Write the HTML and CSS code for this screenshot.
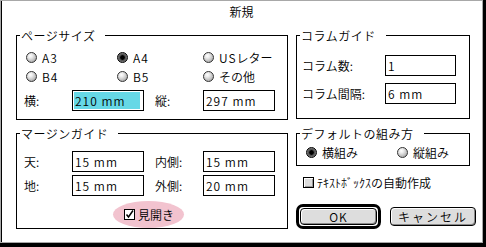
FILE: index.html
```html
<!DOCTYPE html>
<html lang="ja">
<head>
<meta charset="utf-8">
<title>新規</title>
<link rel="stylesheet" href="styles.css">
</head>
<body>
<div class="screen">
  <div class="dialog">
    <div class="title">新規</div>
    <div class="grid">
      <fieldset class="box page">
        <legend>ページサイズ</legend>
        <div class="radios">
          <span class="opt"><span class="radio"></span><span class="lat">A3</span></span>
          <span class="opt"><span class="radio on"></span><span class="lat">A4</span></span>
          <span class="opt"><span class="radio"></span><span><span class="lat">US</span>レター</span></span>
          <span class="opt"><span class="radio"></span><span class="lat">B4</span></span>
          <span class="opt"><span class="radio"></span><span class="lat">B5</span></span>
          <span class="opt"><span class="radio"></span><span>その他</span></span>
        </div>
        <div class="fields">
          <span class="lbl">横:</span><span class="field"><span class="sel">210 mm</span></span>
          <span class="lbl">縦:</span><span class="field">297 mm</span>
        </div>
      </fieldset>
      <fieldset class="box cols">
        <legend>コラムガイド</legend>
        <div class="colfields">
          <span class="lbl">コラム数:</span><span class="field">1</span>
          <span class="lbl">コラム間隔:</span><span class="field">6 mm</span>
        </div>
      </fieldset>
      <fieldset class="box margin">
        <legend>マージンガイド</legend>
        <div class="fields mfields">
          <span class="lbl">天:</span><span class="field">15 mm</span>
          <span class="lbl">内側:</span><span class="field">15 mm</span>
          <span class="lbl">地:</span><span class="field">15 mm</span>
          <span class="lbl">外側:</span><span class="field">20 mm</span>
        </div>
        <div class="spread">
          <span class="check"><svg width="9" height="9" viewBox="0 0 9 9"><path d="M1.5 4.5 L3.5 7 L8 0.5" fill="none" stroke="#000" stroke-width="1.5"/></svg></span><span>見開き</span>
        </div>
      </fieldset>
      <div class="side">
        <fieldset class="box default">
          <legend>デフォルトの組み方</legend>
          <div class="dradios">
            <span class="opt"><span class="radio on"></span><span>横組み</span></span>
            <span class="opt"><span class="radio"></span><span>縦組み</span></span>
          </div>
        </fieldset>
        <div class="auto"><span class="check gray"></span><span>ﾃｷｽﾄﾎﾞｯｸｽの自動作成</span></div>
        <div class="buttons">
          <span class="ring"><span class="btn lat">OK</span></span>
          <span class="btn cancel">キャンセル</span>
        </div>
      </div>
    </div>
  </div>
</div>
</body>
</html>
```
FILE: styles.css
```css
html, body {
  margin: 0;
  padding: 0;
}
body {
  font-family: "Noto Sans CJK JP", "Noto Sans CJK SC", sans-serif;
  font-size: 12px;
  font-weight: 350;
  color: #000;
  background: #000;
}
.lat {
  letter-spacing: 1px;
}
.screen {
  width: 486px;
  height: 247px;
  background: #000;
  overflow: hidden;
}
.dialog {
  box-sizing: border-box;
  width: 483px;
  height: 243px;
  background: #fff;
  border: 1px solid #a8a8a8;
  box-shadow: inset 1px 0 0 #000;
}
.title {
  text-align: center;
  padding-top: 4px;
  line-height: 14px;
  height: 15px;
}
.grid {
  margin: 8px 0 0 15px;
  display: grid;
  grid-template-columns: 272px 174px;
  column-gap: 8px;
  row-gap: 6px;
  align-items: start;
}
.box {
  margin: 0;
  padding: 0;
  border: 1px solid #000;
  min-width: 0;
}
.box legend {
  margin-left: 3px;
  padding: 0 10px 0 1px;
  line-height: 15px;
  font-size: 12px;
  letter-spacing: 0.5px;
}
.page {
  padding: 5px 0 8px 0;
}
.radios {
  display: grid;
  grid-template-columns: 91px 86px auto;
  grid-auto-rows: 19px;
  padding-left: 9px;
}
.opt {
  display: flex;
  align-items: center;
  gap: 5px;
  line-height: 19px;
}
.radio {
  display: inline-block;
  box-sizing: border-box;
  width: 11px;
  height: 11px;
  border-radius: 50%;
  border: 1px solid #333;
  background: radial-gradient(circle at 38% 32%, #fff 0, #ececec 25%, #bcbcbc 65%, #8a8a8a 100%);
}
.radio.on {
  border-color: #000;
  background: radial-gradient(circle at 50% 50%, #000 0, #000 30%, #444 40%, #7a7a7a 70%, #333 100%);
}
.fields {
  display: grid;
  grid-template-columns: 48px 72px 59px 72px;
  margin-top: 4px;
  padding-left: 7px;
}
.fields .lbl:nth-child(3), .fields .lbl:nth-child(7) {
  padding-left: 11px;
}
.lbl {
  line-height: 21px;
}
.field {
  box-sizing: border-box;
  height: 21px;
  border: 1px solid #000;
  line-height: 19px;
  padding-left: 2px;
  white-space: nowrap;
  overflow: hidden;
  letter-spacing: 1px;
}
.field .sel {
  display: inline-block;
  margin: 1px 0 0 -1px;
  width: 66px;
  height: 17px;
  line-height: 17px;
  padding-left: 1px;
  box-sizing: border-box;
  background: #66d8e6;
  vertical-align: top;
}
.cols {
  padding: 12px 0 14px 0;
}
.colfields {
  display: grid;
  grid-template-columns: 83px 71px;
  row-gap: 7px;
  padding-left: 5px;
}
.margin {
  padding: 10px 0 0 0;
}
.mfields {
  margin-top: 0;
  row-gap: 3px;
}
.spread {
  margin: 5px 0 0 96px;
  width: 71px;
  height: 27px;
  border-radius: 50%;
  background: #f2c3cf;
  display: flex;
  align-items: center;
  padding-left: 11px;
  box-sizing: border-box;
  gap: 3px;
}
.check {
  display: inline-flex;
  align-items: center;
  justify-content: center;
  box-sizing: border-box;
  width: 11px;
  height: 11px;
  border: 1px solid #000;
  background: #fff;
}
.check.gray {
  background: #dcdcdc;
  box-shadow: inset 1px 1px 0 #fff, inset -1px -1px 0 #999;
}
.side {
  display: flex;
  flex-direction: column;
}
.default {
  padding: 2px 0 3px 0;
}
.dradios {
  display: grid;
  grid-template-columns: 91px auto;
  grid-auto-rows: 19px;
  padding-left: 9px;
}
.auto {
  margin-top: 7px;
  height: 19px;
  display: flex;
  align-items: center;
  gap: 3px;
  padding-left: 7px;
}
.buttons {
  margin-top: 12px;
  display: flex;
  align-items: center;
  gap: 9px;
  width: 180px;
}
.ring {
  box-sizing: border-box;
  width: 86px;
  height: 25px;
  border: 3px solid #000;
  border-radius: 7px;
  padding: 1px;
  display: flex;
}
.btn {
  box-sizing: border-box;
  flex: 1;
  display: flex;
  align-items: center;
  justify-content: center;
  border: 1px solid #000;
  border-radius: 4px;
  background: #dddddd;
  box-shadow: inset 1px 1px 0 #fff, inset -1px -1px 0 #8a8a8a;
  line-height: 15px;
}
.btn.cancel {
  flex: none;
  width: 86px;
  height: 19px;
  letter-spacing: 2px;
}
```
